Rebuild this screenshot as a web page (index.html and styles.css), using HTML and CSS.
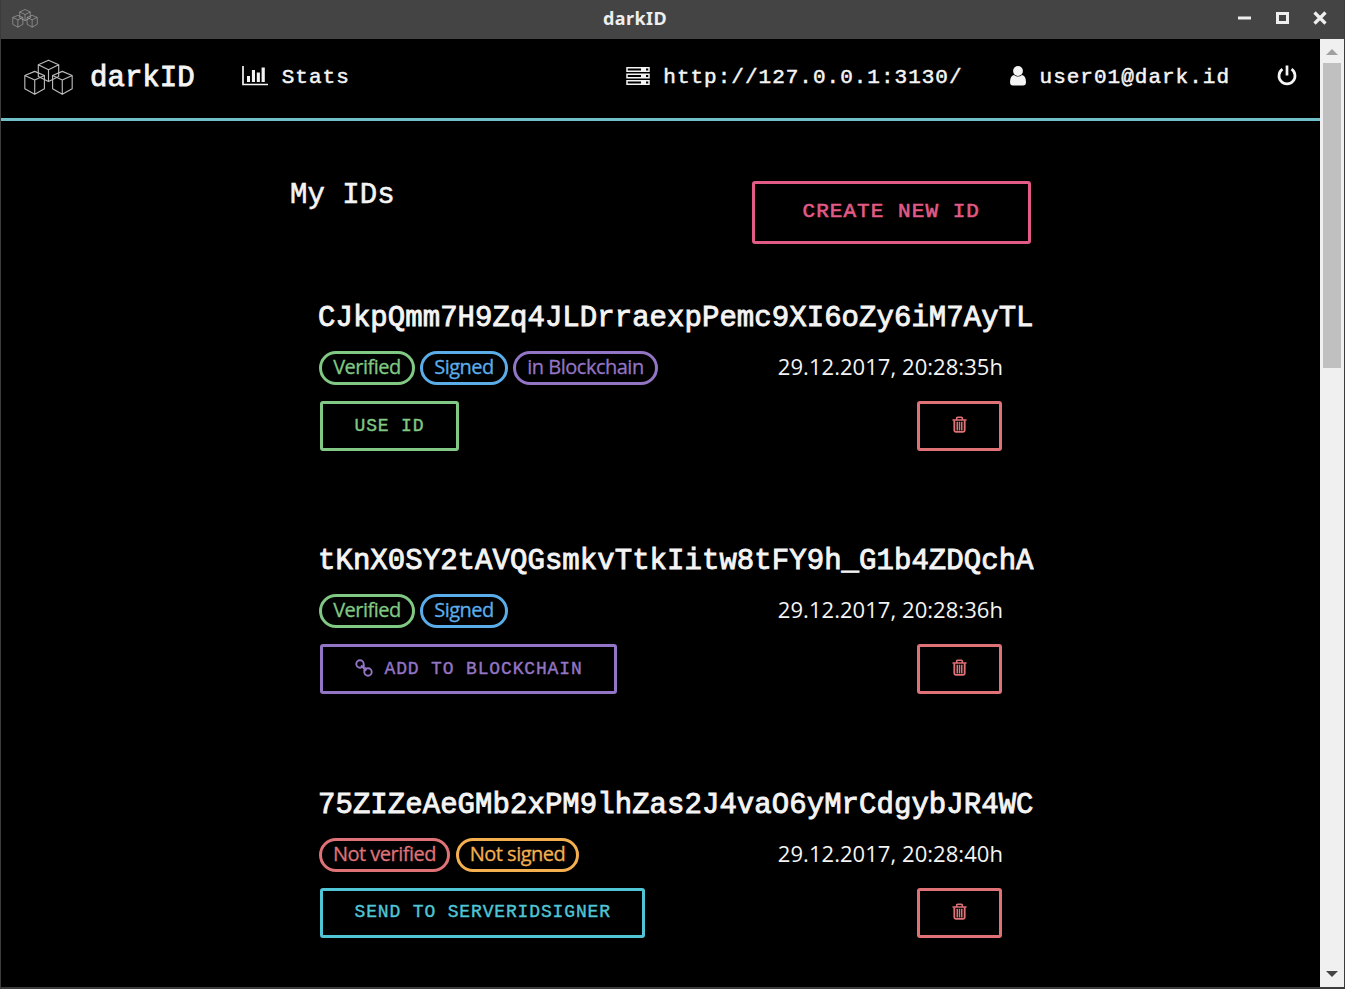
FILE: index.html
```html
<!DOCTYPE html>
<html lang="en">
<head>
<meta charset="utf-8">
<title>darkID</title>
<link rel="stylesheet" href="styles.css">
</head>
<body>
<svg class="defs" width="0" height="0" aria-hidden="true">
  <symbol id="cubes" viewBox="0 0 48 36">
    <g fill="none" stroke="currentColor" stroke-linejoin="round">
      <path d="M24 1 34 5.5V17L24 22 14 17V5.5ZM14 5.5 24 10.500 34 5.500M24 10.500V22"/>
      <path d="M10.500 12 20 16V29L10.500 34.500 .8 29V16ZM.8 16 10.500 20.500 20 16M10.500 20.500V34.500"/>
      <path d="M37.500 12 47.200 16V29L37.500 34.500 28 29V16ZM28 16 37.500 20.500 47.200 16M37.500 20.500V34.500"/>
    </g>
  </symbol>
  <symbol id="trash" viewBox="0 0 16 18">
    <path fill="none" stroke="currentColor" stroke-width="1.700" d="M.5 4.200H15.500M5 4V2.300Q5 1.300 6 1.300H10Q11 1.300 11 2.300V4"/>
    <path fill="none" stroke="currentColor" stroke-width="2" d="M2.500 4.500V15.500Q2.500 16.800 4 16.800H12Q13.500 16.800 13.500 15.500V4.500"/>
    <path fill="none" stroke="currentColor" stroke-width="1.600" d="M5.600 6V15.500M8 6V15.500M10.400 6V15.500"/>
  </symbol>
</svg>
<div class="window">
  <header class="titlebar">
    <svg class="app-icon"><use href="#cubes"/></svg>
    <span class="window-title">darkID</span>
    <svg class="controls" viewBox="0 0 90 14">
      <path d="M0 7H13" stroke="currentColor" stroke-width="3"/>
      <rect x="39.500" y="2.500" width="10" height="9" fill="none" stroke="currentColor" stroke-width="3"/>
      <path d="M76.500 1.500 87.500 12.500M87.500 1.500 76.500 12.500" stroke="currentColor" stroke-width="3.200"/>
    </svg>
  </header>
  <div class="viewport">
    <div class="page">
      <nav class="navbar">
        <svg class="logo"><use href="#cubes"/></svg>
        <span class="brand">darkID</span>
        <span class="nav-item stats">
          <svg width="26" height="20" viewBox="0 0 26 20"><path d="M1 0V18.500H26" fill="none" stroke="currentColor" stroke-width="1.700"/><path d="M5 10H8V16H5ZM9.900 4H13V16H9.900ZM14.800 6.500H17.900V16H14.800ZM19.600 1.500H22.800V16H19.600Z" fill="currentColor"/></svg>
          <span>Stats</span>
        </span>
        <span class="nav-item server">
          <svg width="24" height="18" viewBox="0 0 24 18"><g fill="none" stroke="currentColor" stroke-width="1.500"><path d="M1 .8H23V4.200H1ZM1 7.300H23V10.700H1ZM1 13.800H23V17.200H1Z"/></g><path d="M15 1H20V4H15ZM15 7.500H20V10.500H15ZM15 14H20V17H15Z" fill="currentColor"/></svg>
          <span>http://127.0.0.1:3130/</span>
        </span>
        <span class="nav-item user">
          <svg width="16" height="20" viewBox="0 0 16 20"><circle cx="8" cy="5" r="4.900" fill="currentColor"/><path d="M4 9Q8 12 12 9Q16 10 16 16Q16 19.500 13 19.500H3Q0 19.500 0 16Q0 10 4 9Z" fill="currentColor"/></svg>
          <span>user01@dark.id</span>
        </span>
        <svg class="power" viewBox="0 0 20 21"><path d="M5.500 4.200A8 8 0 1 0 14.500 4.200M10 .5V10.500" fill="none" stroke="currentColor" stroke-width="2.700"/></svg>
      </nav>
      <main class="content">
        <div class="heading">
          <h1>My IDs</h1>
          <button class="btn large pink">CREATE NEW ID</button>
        </div>
        <section class="id-card">
          <h2>CJkpQmm7H9Zq4JLDrraexpPemc9XI6oZy6iM7AyTL</h2>
          <div class="meta">
            <span class="badge green verified">Verified</span>
            <span class="badge blue signed">Signed</span>
            <span class="badge purple chain">in Blockchain</span>
            <time>29.12.2017, 20:28:35h</time>
          </div>
          <div class="actions">
            <button class="btn green">USE ID</button>
            <button class="btn red delete" aria-label="Delete"><svg><use href="#trash"/></svg></button>
          </div>
        </section>
        <section class="id-card">
          <h2>tKnX0SY2tAVQGsmkvTtkIitw8tFY9h_G1b4ZDQchA</h2>
          <div class="meta">
            <span class="badge green verified">Verified</span>
            <span class="badge blue signed">Signed</span>
            <time>29.12.2017, 20:28:36h</time>
          </div>
          <div class="actions">
            <button class="btn purple"><svg class="link" viewBox="0 0 18 18"><g fill="none" stroke="currentColor" stroke-width="1.900"><circle cx="5" cy="5" r="3.700"/><circle cx="13" cy="13" r="3.700"/><path d="M6 6.500Q9 10 11.500 11.500M8.500 5.500Q9.500 8 8 9.500M9.500 12Q9 10 11 8.800"/></g></svg>ADD TO BLOCKCHAIN</button>
            <button class="btn red delete" aria-label="Delete"><svg><use href="#trash"/></svg></button>
          </div>
        </section>
        <section class="id-card">
          <h2>75ZIZeAeGMb2xPM9lhZas2J4vaO6yMrCdgybJR4WC</h2>
          <div class="meta">
            <span class="badge red not-verified">Not verified</span>
            <span class="badge orange not-signed">Not signed</span>
            <time>29.12.2017, 20:28:40h</time>
          </div>
          <div class="actions">
            <button class="btn cyan">SEND TO SERVERIDSIGNER</button>
            <button class="btn red delete" aria-label="Delete"><svg><use href="#trash"/></svg></button>
          </div>
        </section>
      </main>
    </div>
    <div class="scrollbar">
      <svg class="arrow up" viewBox="0 0 12 6"><path d="M0 6 6 0 12 6Z"/></svg>
      <div class="thumb"></div>
      <svg class="arrow down" viewBox="0 0 12 6"><path d="M0 0 6 6 12 0Z"/></svg>
    </div>
  </div>
</div>
</body>
</html>
```
FILE: styles.css
```css
* { box-sizing: border-box; }
body { margin: 0; background: #000; color: #f4f4f4; font-family: "Open Sans", sans-serif; }
.defs { position: absolute; }
.window {
  height: 989px;
  display: flex;
  flex-direction: column;
  border: 1px solid #3c3c3c;
  border-top: 0;
  border-bottom-width: 2px;
  overflow: hidden;
}
.titlebar {
  flex: none;
  height: 39px;
  display: grid;
  grid-template-columns: 1fr auto 1fr;
  align-items: center;
  padding: 0 16px 3px 11px;
  background: #444;
  color: #eee;
}
.app-icon { width: 26px; height: 19px; color: #c0c0c0; }
.window-title { font: bold 18px/24px "Noto Sans", sans-serif; letter-spacing: .4px; margin: -1px 70px 0 0; }
.controls { width: 90px; height: 14px; justify-self: end; }
.viewport { flex: 1; display: flex; min-height: 0; }
.page { flex: 1; min-width: 0; overflow: hidden; }

.navbar {
  height: 82px;
  display: flex;
  align-items: center;
  padding: 0 23px 3px 23px;
  border-bottom: 3px solid #70c0ca;
  font-family: "Liberation Mono", monospace;
  white-space: nowrap;
}
.logo { width: 49px; height: 37px; color: #bbb; margin: 1px 17px 0 0; stroke-width: 1.1; }
.brand { font-size: 29px; letter-spacing: .05px; -webkit-text-stroke: .9px; margin-top: 2px; }
.nav-item { display: flex; align-items: center; font-size: 21px; letter-spacing: 1px; -webkit-text-stroke: .5px; }
.nav-item svg { flex: none; margin-top: -3px; }
.stats { margin-left: 47px; gap: 14px; }
.server { margin-left: auto; gap: 13px; }
.user { margin-left: 47px; gap: 14px; }
.power { width: 20px; height: 21px; margin: -3px 0 0 47px; }

.content { width: 741px; margin: 60px 0 0 289px; }
.heading { display: flex; justify-content: space-between; height: 108px; }
h1, h2 { margin: 0; font-family: "Liberation Mono", monospace; white-space: nowrap; }
h1 { font-size: 29px; font-weight: 400; line-height: 30px; letter-spacing: .05px; -webkit-text-stroke: .6px; }
h2 { width: 716px; height: 62px; overflow: hidden; font-size: 29px; font-weight: 400; line-height: 60px; letter-spacing: .05px; -webkit-text-stroke: .9px; }
.id-card { height: 243.400px; padding-left: 28px; }
.meta { display: flex; width: 685px; height: 34px; gap: 5px; padding-left: 1px; }
.badge {
  flex: none;
  height: 34px;
  border: 3px solid currentColor;
  border-radius: 17px;
  font-size: 20px;
  line-height: 26px;
  text-align: center;
  letter-spacing: -.5px;
  white-space: nowrap;
  -webkit-text-stroke: .3px;
}
.verified { width: 96px; }
.signed { width: 88px; }
.chain { width: 145px; }
.not-verified { width: 131px; }
.not-signed { width: 123px; margin-left: 1px; }
time { margin-left: auto; font-size: 22px; line-height: 31px; letter-spacing: .05px; }
.actions { display: flex; justify-content: space-between; width: 684px; padding: 16px 0 0 2px; }
.btn {
  height: 50px;
  padding: 0 31.500px 1px;
  display: flex;
  align-items: center;
  background: none;
  border: 3px solid currentColor;
  border-radius: 3px;
  font-family: "Liberation Mono", monospace;
  font-size: 18px;
  letter-spacing: .850px;
  -webkit-text-stroke: .4px;
}
.btn.large { height: 63px; padding: 0 48px 3px; font-size: 21px; letter-spacing: 1.050px; -webkit-text-stroke: .6px; }
.delete { width: 85px; justify-content: center; }
.delete svg { width: 15px; height: 17px; margin-top: -2px; }
.link { width: 18px; height: 18px; margin: -2px 12px 0 0; }
.green { color: #80c883; }
.blue { color: #5badea; }
.purple { color: #9375c5; }
.pink { color: #e25b87; }
.red { color: #df7277; }
.orange { color: #f4b04f; }
.cyan { color: #4fc5d5; }

.scrollbar {
  width: 24px;
  display: flex;
  flex-direction: column;
  align-items: center;
  padding: 10px 0;
  background: #f0f0f0;
}
.arrow { width: 12px; height: 6px; fill: #a0a0a0; }
.thumb { width: 18px; height: 305px; margin-top: 8px; background: #c0c0c0; }
.down { margin-top: auto; fill: #444; }
```
